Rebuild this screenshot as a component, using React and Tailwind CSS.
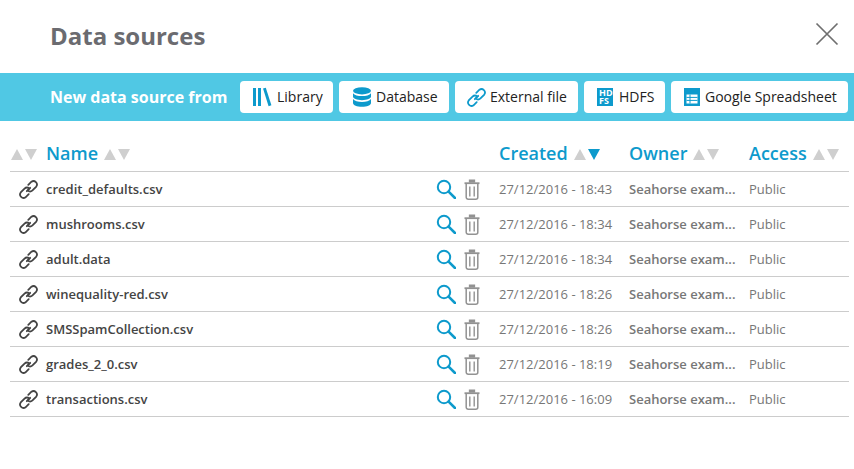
const BLUE = "#0d9acc";

function Sort({ active }) {
  return (
    <span className="inline-flex items-center gap-[2px] mt-[1px]">
      <svg width="12" height="11" viewBox="0 0 12 11"><path d="M6 0L12 11H0z" fill="#cfcfcf" /></svg>
      <svg width="12" height="11" viewBox="0 0 12 11"><path d="M0 0h12L6 11z" fill={active ? BLUE : "#cfcfcf"} /></svg>
    </span>
  );
}

function Link({ color, size = 21 }) {
  return (
    <svg width={size} height={size} viewBox="0 0 20 20" fill="none" stroke={color} strokeWidth="1.7" strokeLinecap="round">
      <path d="M8.4 11.6l3.2-3.2" />
      <path d="M9.8 5.6l3-3a3.3 3.3 0 0 1 4.6 4.6l-3.6 3.6a3.3 3.3 0 0 1-4.6 0" />
      <path d="M10.2 14.4l-3 3a3.3 3.3 0 0 1-4.6-4.6l3.6-3.6a3.3 3.3 0 0 1 4.6 0" />
    </svg>
  );
}

function Search() {
  return (
    <svg width="20" height="20" viewBox="0 0 20 20" fill="none" stroke={BLUE}>
      <circle cx="8" cy="8" r="6.2" strokeWidth="2" />
      <path d="M12.6 12.6L19 19" strokeWidth="2.6" strokeLinecap="round" />
    </svg>
  );
}

function Trash() {
  return (
    <svg width="16" height="21" viewBox="0 0 16 21" fill="none" stroke="#929292" strokeWidth="1.5">
      <path d="M0.5 4.2h15" strokeWidth="1.8" />
      <path d="M5.6 3.6V1.2h4.8v2.4" fill="#929292" />
      <path d="M2.2 4.6v13.6a2 2 0 0 0 2 2h7.6a2 2 0 0 0 2-2V4.6" />
      <path d="M5.8 7.5v10M10.2 7.5v10" strokeWidth="1.4" />
    </svg>
  );
}

function LibraryIcon() {
  return (
    <svg width="20" height="20" viewBox="0 0 20 20" fill={BLUE}>
      <rect x="1" y="1" width="3" height="18" />
      <rect x="6" y="1" width="3" height="18" />
      <path d="M11 1.6l2.8-.9 5.6 17.6-2.8.9z" />
    </svg>
  );
}

function DbIcon() {
  return (
    <svg width="20" height="20" viewBox="0 0 20 20" fill={BLUE}>
      <ellipse cx="10" cy="3.8" rx="9" ry="3.6" />
      <path d="M1 6.2c1.4 2 5 2.9 9 2.9s7.6-.9 9-2.9v3.4c0 2-4 3.6-9 3.6s-9-1.6-9-3.6z" />
      <path d="M1 12c1.4 2 5 2.9 9 2.9s7.6-.9 9-2.9v4c0 2.2-4 3.8-9 3.8s-9-1.6-9-3.8z" />
    </svg>
  );
}

function HdfsIcon() {
  return (
    <span className="w-4 h-[18px] bg-[#0d9acc] text-white text-[9px] leading-[8px] font-bold flex flex-col justify-center pl-[2px]">
      <span>HD</span>
      <span>FS</span>
    </span>
  );
}

function SheetIcon() {
  return (
    <svg width="16" height="18" viewBox="0 0 16 18">
      <rect width="16" height="18" fill={BLUE} />
      <rect x="2.5" y="6.5" width="11" height="9" fill="#fff" />
      <path d="M2.5 9.4h11M2.5 12.4h11M6 6.5v9" stroke={BLUE} strokeWidth="1" />
    </svg>
  );
}

const buttons = [
  { label: "Library", icon: <LibraryIcon />, cls: "w-[93px] pl-[12px] gap-[5px]" },
  { label: "Database", icon: <DbIcon />, cls: "w-[110px] pl-[13px] gap-[4px]" },
  { label: "External file", icon: <Link color={BLUE} />, cls: "w-[123px] pl-[11px] gap-[3px]" },
  { label: "HDFS", icon: <HdfsIcon />, cls: "w-[81px] pl-[13px] gap-[6px]" },
  { label: "Google Spreadsheet", icon: <SheetIcon />, cls: "w-[177px] pl-[13px] gap-[5px]" },
];

const rows = [
  ["credit_defaults.csv", "27/12/2016 - 18:43"],
  ["mushrooms.csv", "27/12/2016 - 18:34"],
  ["adult.data", "27/12/2016 - 18:34"],
  ["winequality-red.csv", "27/12/2016 - 18:26"],
  ["SMSSpamCollection.csv", "27/12/2016 - 18:26"],
  ["grades_2_0.csv", "27/12/2016 - 18:19"],
  ["transactions.csv", "27/12/2016 - 16:09"],
];

const cols = "grid grid-cols-[36px_390px_63px_130px_120px_100px] items-center";

export default function App() {
  return (
    <div className="w-[854px] h-[469px] bg-white overflow-hidden font-['Open_Sans',sans-serif]">
      <div className="h-[73px] pl-[50px] pr-[15px] flex items-center justify-between">
        <h1 className="text-[24px] font-bold text-[#6b6b70] mb-[2px]">Data sources</h1>
        <svg width="24" height="24" viewBox="0 0 24 24" stroke="#6f6f6f" strokeWidth="1.7" className="mb-[5px]">
          <path d="M1.5 1.5l21 21M22.5 1.5l-21 21" />
        </svg>
      </div>
      <div className="h-12 bg-[#50c8e4] pl-[50px] flex items-center">
        <span className="w-[190px] text-white font-bold text-[16px]">New data source from</span>
        <div className="flex gap-[6px]">
          {buttons.map((b) => (
            <div key={b.label} className={`${b.cls} h-8 bg-white rounded-[4px] flex items-center text-[14px] text-[#222222]`}>
              {b.icon}
              <span className="mb-[1px]">{b.label}</span>
            </div>
          ))}
        </div>
      </div>
      <div className="mx-[10px] w-[839px] mt-[15px]">
        <div className={`${cols} h-9 border-b border-[#cccccc] text-[18px] font-semibold text-[#0d9acc]`}>
          <span className="pl-[1px]"><Sort /></span>
          <span className="flex items-center gap-[6px]">Name <Sort /></span>
          <span />
          <span className="flex items-center gap-[6px]">Created <Sort active /></span>
          <span className="flex items-center gap-[6px]">Owner <Sort /></span>
          <span className="flex items-center gap-[6px]">Access <Sort /></span>
        </div>
        {rows.map(([name, date]) => (
          <div key={name} className={`${cols} h-[35px] border-b border-[#cccccc] text-[13px]`}>
            <span className="pl-[8px] text-[#333]"><Link color="#444444" /></span>
            <span className="font-semibold text-[#444444] pt-[1px]">{name}</span>
            <span className="flex items-center gap-[8px]"><Search /><Trash /></span>
            <span className="text-[#777777] pt-[1px]">{date}</span>
            <span className="font-semibold text-[#777777] pt-[1px]">Seahorse exam...</span>
            <span className="text-[#777777] pt-[1px]">Public</span>
          </div>
        ))}
      </div>
    </div>
  );
}
